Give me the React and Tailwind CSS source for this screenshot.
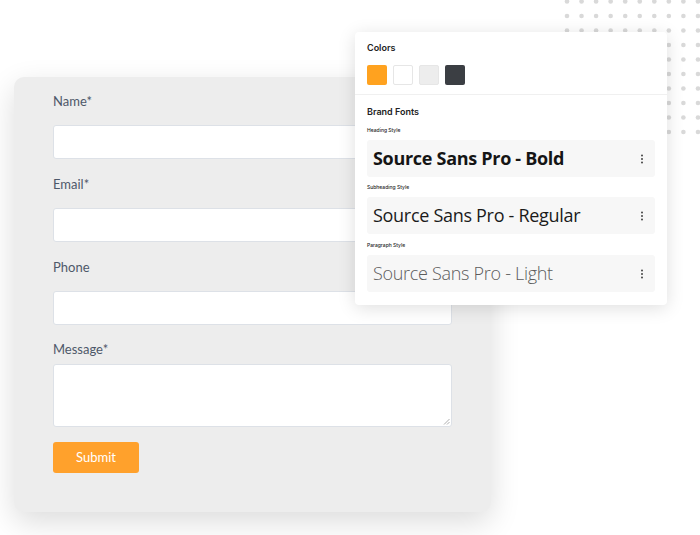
import React from "react";

const cols = Array.from({ length: 10 }, (_, i) => 567 + i * 14.55);
const rows = Array.from({ length: 10 }, (_, i) => 1.5 + i * 14.5);

function DotGrid() {
  return (
    <svg className="absolute left-0 top-0" width="700" height="140">
      {rows.map((y) =>
        cols.map((x) => <circle key={x + "-" + y} cx={x} cy={y} r="2.3" fill="#d9d9d9" />)
      )}
    </svg>
  );
}

function Kebab() {
  return (
    <svg width="4" height="10" viewBox="0 0 4 10" className="shrink-0">
      <circle cx="2" cy="1.5" r="1" fill="#444" />
      <circle cx="2" cy="5" r="1" fill="#444" />
      <circle cx="2" cy="8.5" r="1" fill="#444" />
    </svg>
  );
}

function FontBox({ children, className }) {
  return (
    <div className="flex h-[37px] items-center justify-between rounded-[3px] bg-[#f7f7f7] pl-[6px] pr-[11px]">
      <span className={"font-['Open_Sans',sans-serif] whitespace-nowrap tracking-[-0.3px] " + className}>{children}</span>
      <Kebab />
    </div>
  );
}

function Field({ label, gap }) {
  return (
    <div className="flex flex-col">
      <div className="h-[20px] text-[13px] leading-[20px] text-[#4d5869]">{label}</div>
      <div className={"h-[34px] rounded-[3px] border border-[#dde1e7] bg-white " + gap}></div>
    </div>
  );
}

export default function App() {
  return (
    <div className="relative h-[535px] w-[700px] overflow-hidden bg-white font-['Lato',sans-serif]">
      <DotGrid />
      <div className="relative ml-[14px] mt-[77px] flex h-[435px] w-[477px] flex-col rounded-[10px] bg-[#ededed] px-[39px] pt-[14px] shadow-[0_10px_30px_rgba(0,0,0,0.14)]">
        <div className="flex flex-col gap-[15px]">
          <Field label="Name*" gap="mt-[14px]" />
          <Field label="Email*" gap="mt-[14px]" />
          <Field label="Phone" gap="mt-[14px]" />
        </div>
        <div className="mt-[14px] h-[20px] text-[13px] leading-[20px] text-[#4d5869]">Message*</div>
        <div className="relative mt-[5px] h-[63px] rounded-[3px] border border-[#dde1e7] bg-white">
          <svg className="absolute bottom-[1px] right-[1px]" width="7" height="7" viewBox="0 0 7 7">
            <line x1="1" y1="6.5" x2="6.5" y2="1" stroke="#999" strokeWidth="0.8" />
            <line x1="4" y1="6.5" x2="6.5" y2="4" stroke="#999" strokeWidth="0.8" />
          </svg>
        </div>
        <div className="mt-[15px] flex h-[31px] w-[86px] items-center justify-center rounded-[3px] bg-[#ffa12c] text-[13px] text-white">
          Submit
        </div>
      </div>

      <div className="absolute left-[355px] top-[32px] flex h-[273px] w-[312px] flex-col rounded-[4px] bg-white px-[12px] pt-[10px] font-['Inter',sans-serif] shadow-[0_3px_18px_rgba(0,0,0,0.13)]">
        <div className="h-[12px] text-[9px] font-semibold leading-[12px] text-[#222]">Colors</div>
        <div className="mt-[11px] flex gap-[6px]">
          <div className="h-[20px] w-[20px] rounded-[2px] bg-[#ffa21f]"></div>
          <div className="h-[20px] w-[20px] rounded-[2px] border border-[#e6e6e6] bg-white"></div>
          <div className="h-[20px] w-[20px] rounded-[2px] border border-[#e6e6e6] bg-[#ededed]"></div>
          <div className="h-[20px] w-[20px] rounded-[2px] bg-[#3b3e43]"></div>
        </div>
        <div className="-mx-[12px] mt-[9px] h-px bg-[#f0f0f0]"></div>
        <div className="mt-[11px] h-[12px] text-[9px] font-semibold leading-[12px] text-[#222]">Brand Fonts</div>
        <div className="mt-[8px] h-[8px] text-[5px] font-medium leading-[8px] text-[#222]">Heading Style</div>
        <div className="mt-[6px]">
          <FontBox className="text-[18px] font-bold text-[#151515]">Source Sans Pro - Bold</FontBox>
        </div>
        <div className="mt-[6px] h-[8px] text-[5px] font-medium leading-[8px] text-[#222]">Subheading Style</div>
        <div className="mt-[6px]">
          <FontBox className="text-[18px] text-[#1b1b1b]">Source Sans Pro - Regular</FontBox>
        </div>
        <div className="mt-[7px] h-[8px] text-[5px] font-medium leading-[8px] text-[#222]">Paragraph Style</div>
        <div className="mt-[6px]">
          <FontBox className="text-[18px] font-light text-[#5c5c5c]">Source Sans Pro - Light</FontBox>
        </div>
      </div>
    </div>
  );
}
